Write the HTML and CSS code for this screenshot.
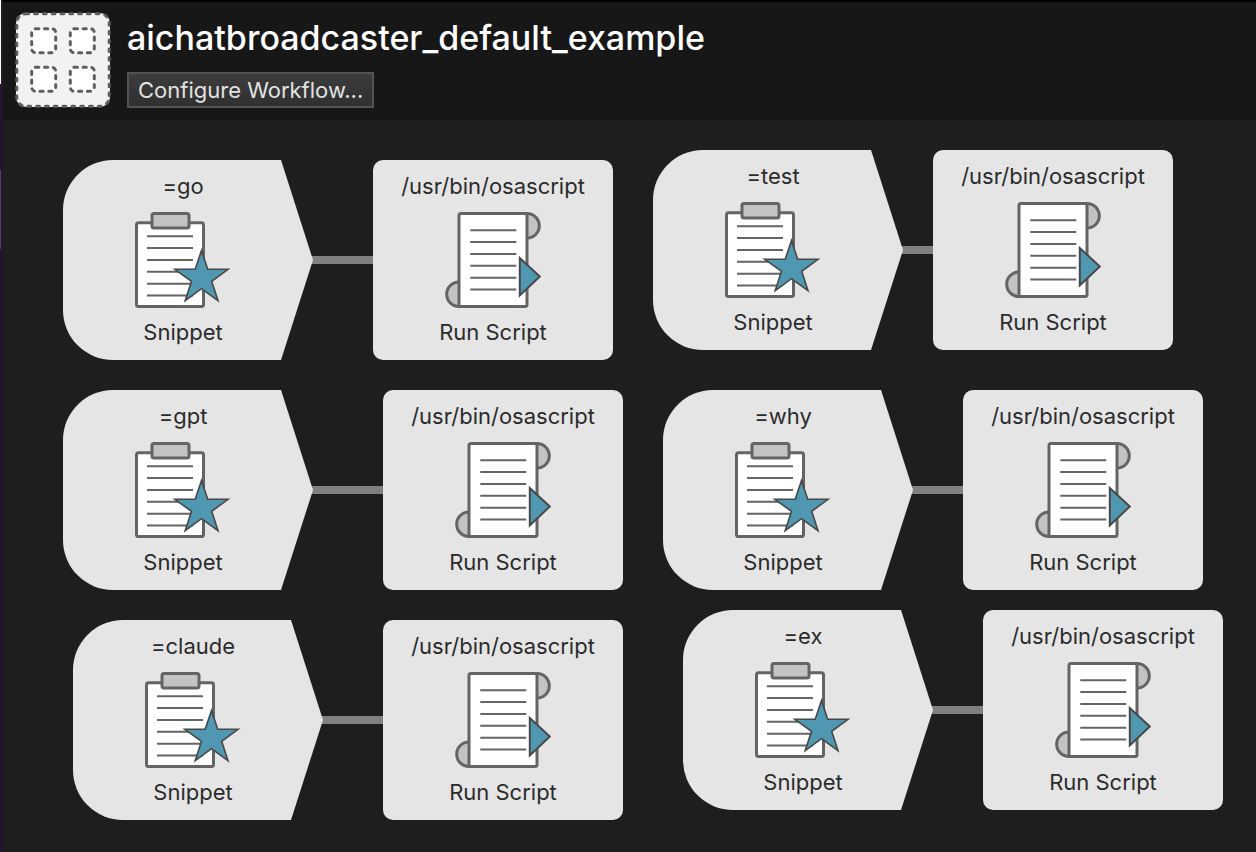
FILE: index.html
```html
<!DOCTYPE html>
<html lang="en">
<head>
<meta charset="utf-8">
<title>aichatbroadcaster_default_example</title>
<link rel="stylesheet" href="styles.css">
</head>
<body>
<svg class="defs" aria-hidden="true">
  <symbol id="clipboard" viewBox="0 0 96 96">
    <rect x="1.500" y="10.800" width="67" height="83.700" rx="2" fill="#fff" stroke="#646464" stroke-width="3"/>
    <rect x="17" y="1.500" width="37" height="14.500" rx="2" fill="#c3c3c3" stroke="#646464" stroke-width="3"/>
    <path d="M12 24.200h46M12 36h46M12 48h46M12 59.800h46M12 71.700h46M12 83.600h46" stroke="#646464" stroke-width="2"/>
    <path d="M66.500 38.500L72.700 57.300H93L76.700 69.300L83 88.700L66.500 76.700L50.200 88.700L56.500 69.300L39.800 57.300H60.200Z" fill="#5097b1" stroke="#484848" stroke-width="1.600"/>
  </symbol>
  <symbol id="scroll" viewBox="0 0 96 96">
    <circle cx="82" cy="13.800" r="12.300" fill="#c3c3c3" stroke="#646464" stroke-width="3"/>
    <circle cx="14" cy="82.200" r="12.300" fill="#c3c3c3" stroke="#646464" stroke-width="3"/>
    <rect x="14" y="1.500" width="68" height="93" rx="2" fill="#fff" stroke="#646464" stroke-width="3"/>
    <path d="M25.300 18.200h46M25.300 30h46M25.300 42h46M25.300 53.800h46M25.300 65.700h46M25.300 77.600h46" stroke="#646464" stroke-width="2"/>
    <path d="M74.800 46V83.500L94.800 64.500Z" fill="#5097b1" stroke="#484848" stroke-width="2"/>
  </symbol>
</svg>
<div class="window">
  <header class="header">
    <svg class="logo" viewBox="0 0 96 96" aria-hidden="true">
      <g stroke="#5f5f5f" stroke-width="3" stroke-linecap="round">
        <rect x="1" y="1" width="94" height="94" rx="10" fill="#f2f2f2" stroke="none"/>
        <rect x="1.800" y="1.800" width="92.400" height="92.400" rx="9" fill="none" stroke-dasharray="2.800 6"/>
        <g fill="#fff" stroke-dasharray="3.200 5.600">
          <rect x="16.700" y="16.700" width="24" height="24" rx="4"/>
          <rect x="55.300" y="16.700" width="24" height="24" rx="4"/>
          <rect x="16.700" y="55.300" width="24" height="24" rx="4"/>
          <rect x="55.300" y="55.300" width="24" height="24" rx="4"/>
        </g>
      </g>
    </svg>
    <div class="heading">
      <h1 class="title">aichatbroadcaster_default_example</h1>
      <button class="configure" type="button">Configure Workflow...</button>
    </div>
  </header>
  <main class="canvas">
    <section class="chain chain-go">
      <div class="node trigger"><span>=go</span><svg class="icon"><use href="#clipboard"/></svg><span>Snippet</span></div>
      <div class="link"></div>
      <div class="node action"><span>/usr/bin/osascript</span><svg class="icon"><use href="#scroll"/></svg><span>Run Script</span></div>
    </section>
    <section class="chain chain-test">
      <div class="node trigger"><span>=test</span><svg class="icon"><use href="#clipboard"/></svg><span>Snippet</span></div>
      <div class="link"></div>
      <div class="node action"><span>/usr/bin/osascript</span><svg class="icon"><use href="#scroll"/></svg><span>Run Script</span></div>
    </section>
    <section class="chain chain-gpt">
      <div class="node trigger"><span>=gpt</span><svg class="icon"><use href="#clipboard"/></svg><span>Snippet</span></div>
      <div class="link"></div>
      <div class="node action"><span>/usr/bin/osascript</span><svg class="icon"><use href="#scroll"/></svg><span>Run Script</span></div>
    </section>
    <section class="chain chain-why">
      <div class="node trigger"><span>=why</span><svg class="icon"><use href="#clipboard"/></svg><span>Snippet</span></div>
      <div class="link"></div>
      <div class="node action"><span>/usr/bin/osascript</span><svg class="icon"><use href="#scroll"/></svg><span>Run Script</span></div>
    </section>
    <section class="chain chain-claude">
      <div class="node trigger"><span>=claude</span><svg class="icon"><use href="#clipboard"/></svg><span>Snippet</span></div>
      <div class="link"></div>
      <div class="node action"><span>/usr/bin/osascript</span><svg class="icon"><use href="#scroll"/></svg><span>Run Script</span></div>
    </section>
    <section class="chain chain-ex">
      <div class="node trigger"><span>=ex</span><svg class="icon"><use href="#clipboard"/></svg><span>Snippet</span></div>
      <div class="link"></div>
      <div class="node action"><span>/usr/bin/osascript</span><svg class="icon"><use href="#scroll"/></svg><span>Run Script</span></div>
    </section>
  </main>
</div>
</body>
</html>
```

FILE: styles.css
```css
* { box-sizing: border-box; }
body {
  margin: 0;
  background: linear-gradient(#fff 84px, #300b50 84px 170px, #55397a 170px 249px, #300b50 249px);
  font-family: Inter, "Liberation Sans", sans-serif;
}
.defs { position: absolute; width: 0; height: 0; }
.window {
  display: flex;
  flex-direction: column;
  min-height: 100vh;
  margin-left: 1px;
  border-left: 2px solid #1a1c1d;
  background: #1e1e1e;
}
.header {
  display: flex;
  gap: 16px;
  padding: 10px 12px 12px;
  border-top: 2px solid #000;
  background: #171717;
}
.logo { width: 96px; height: 96px; }
.heading {
  display: flex;
  flex-direction: column;
  align-items: flex-start;
  gap: 12px;
  padding-top: 4px;
}
.title {
  margin: 0;
  color: #fff;
  font-size: 34px;
  font-weight: 500;
  line-height: 44px;
}
.configure {
  height: 36px;
  padding: 0 9px;
  border: 2px solid #535353;
  background: linear-gradient(#3c3c3c, #303030);
  color: #e2e2e2;
  font: 400 22px/32px Inter, "Liberation Sans", sans-serif;
}
.canvas { position: relative; flex: 1; min-height: 732px; }
.chain { position: absolute; display: flex; align-items: center; }
.chain-go { left: 60px; top: 40px; --link: 62px; }
.chain-test { left: 650px; top: 30px; --link: 32px; }
.chain-gpt { left: 60px; top: 270px; --link: 72px; }
.chain-why { left: 660px; top: 270px; --link: 52px; }
.chain-claude { left: 70px; top: 500px; --link: 62px; }
.chain-ex { left: 680px; top: 490px; --link: 52px; }
.node {
  z-index: 1;
  display: flex;
  flex-direction: column;
  align-items: center;
  height: 200px;
  padding-top: 12px;
  background: #e5e5e5;
  color: #2b2b2b;
  font-size: 22px;
  line-height: 28px;
}
.trigger {
  width: 250px;
  padding-right: 10px;
  border-radius: 50px 0 0 50px;
  clip-path: polygon(0 0, 218px 0, 100% 50%, 218px 100%, 0 100%);
}
.action { width: 240px; border-radius: 10px; }
.icon { width: 96px; height: 96px; margin: 12px 0 10px; }
.link { width: var(--link); height: 8px; margin-left: -2px; background: #808080; }
```
